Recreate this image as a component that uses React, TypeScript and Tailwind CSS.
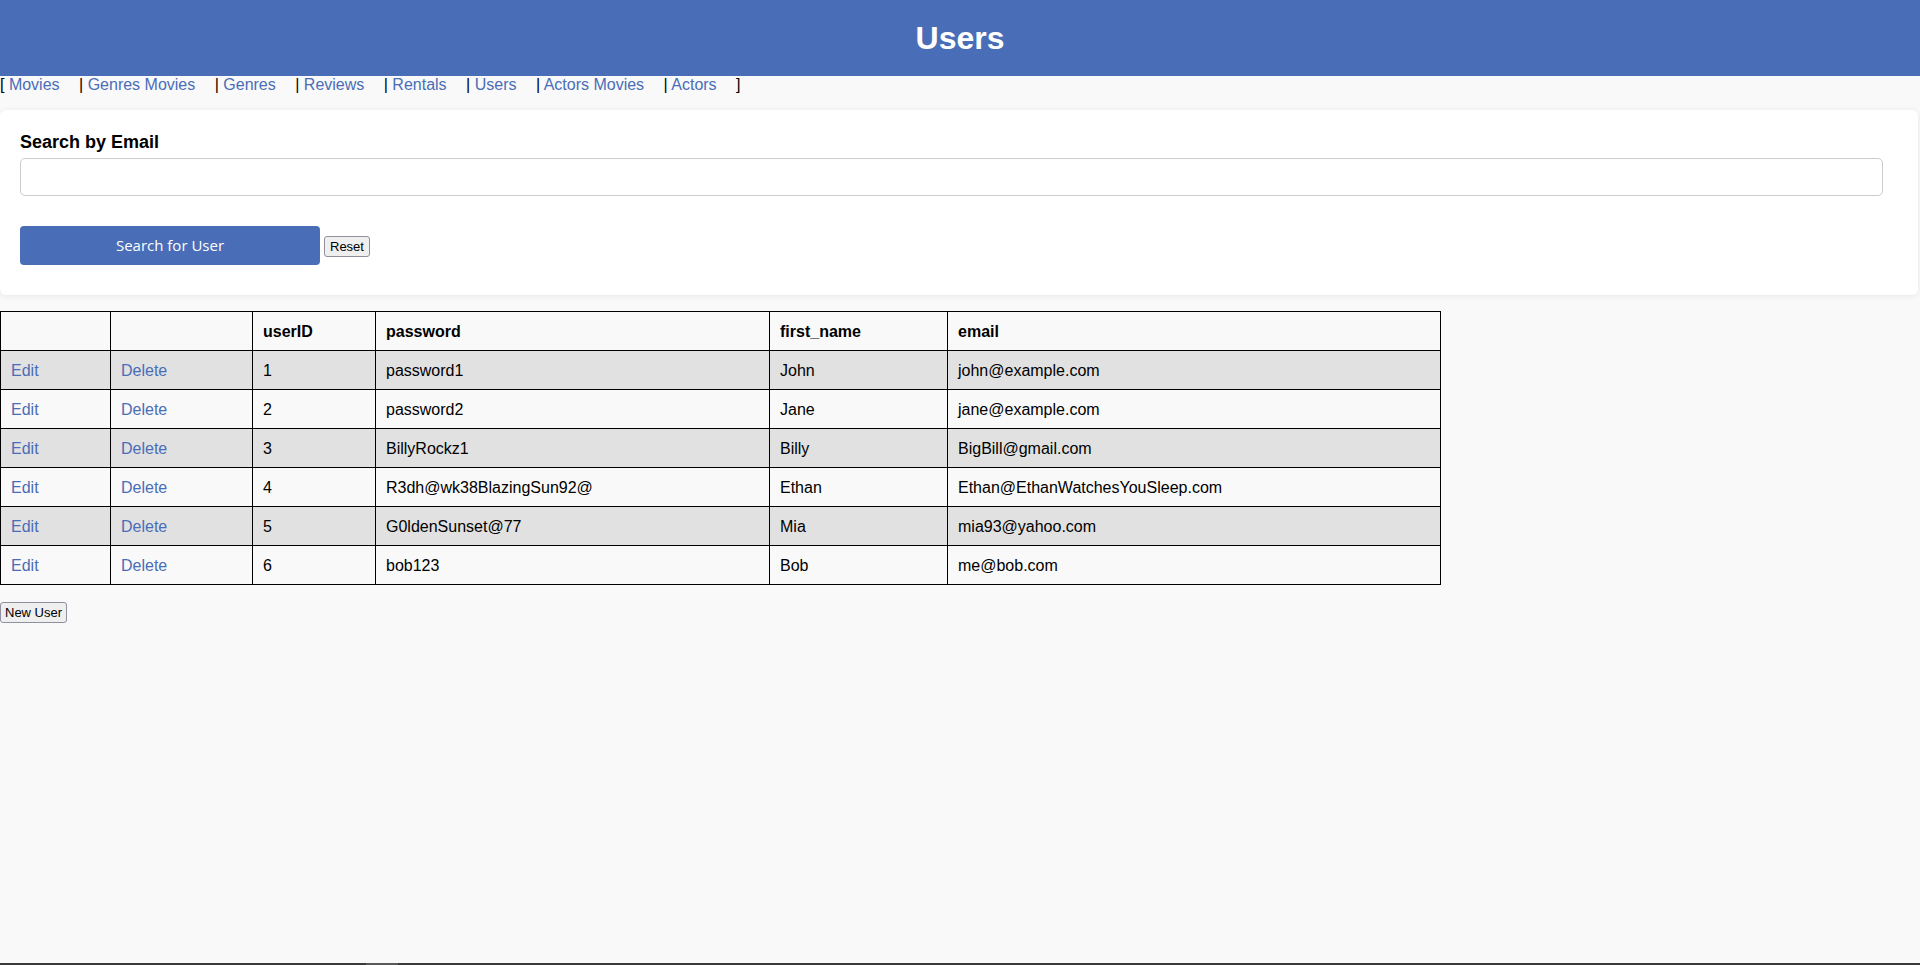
import React from "react";

type User = {
  userID: number;
  password: string;
  first_name: string;
  email: string;
};

const users: User[] = [
  { userID: 1, password: "password1", first_name: "John", email: "john@example.com" },
  { userID: 2, password: "password2", first_name: "Jane", email: "jane@example.com" },
  { userID: 3, password: "BillyRockz1", first_name: "Billy", email: "BigBill@gmail.com" },
  { userID: 4, password: "R3dh@wk38BlazingSun92@", first_name: "Ethan", email: "Ethan@EthanWatchesYouSleep.com" },
  { userID: 5, password: "G0ldenSunset@77", first_name: "Mia", email: "mia93@yahoo.com" },
  { userID: 6, password: "bob123", first_name: "Bob", email: "me@bob.com" },
];

const links = ["Movies", "Genres Movies", "Genres", "Reviews", "Rentals", "Users", "Actors Movies", "Actors"];

function NavBar() {
  return (
    <nav className="h-[18px] text-[16px] leading-[18px] text-black whitespace-pre">
      {"[ "}
      {links.map((name, i) => (
        <span key={name}>
          {i > 0 && "| "}
          <a href="#" className="text-[#4a6db7] mr-[15px]">
            {name}
          </a>
          {" "}
        </span>
      ))}
      {"]"}
    </nav>
  );
}

function SearchCard() {
  return (
    <section className="mt-[16px] mr-[2px] bg-white rounded-[6px] shadow-[0_1px_6px_rgba(0,0,0,0.08)] pt-[22px] px-[20px] pb-[30px]">
      <label className="block text-[18px] leading-[21px] font-bold text-black">Search by Email</label>
      <input
        type="text"
        className="block mt-[5px] w-[1863px] h-[38px] bg-white border border-[#cccccc] rounded-[5px] px-3 outline-none"
      />
      <div className="flex items-center mt-[30px]">
        <button className="w-[300px] h-[39px] bg-[#4a6db7] text-white rounded-[4px] text-[15px] font-['Open_Sans',sans-serif]">
          Search for User
        </button>
        <button className="ml-[4px] mt-[2px] h-[21px] px-[5px] bg-[#efefef] border border-[#8f8f9d] rounded-[3px] text-[13px] leading-none text-black">
          Reset
        </button>
      </div>
    </section>
  );
}

function UsersTable() {
  const cell = "border border-black px-[10px] pt-[1px] h-[39px] text-left align-middle";
  return (
    <table className="mt-[16px] w-[1440px] table-fixed border-collapse text-[16px] leading-[18px]">
      <colgroup>
        <col className="w-[110px]" />
        <col className="w-[142px]" />
        <col className="w-[123px]" />
        <col className="w-[394px]" />
        <col className="w-[178px]" />
        <col className="w-[493px]" />
      </colgroup>
      <thead>
        <tr className="bg-[#f9f9f9]">
          <th className={cell}></th>
          <th className={cell}></th>
          <th className={`${cell} font-bold`}>userID</th>
          <th className={`${cell} font-bold`}>password</th>
          <th className={`${cell} font-bold`}>first_name</th>
          <th className={`${cell} font-bold`}>email</th>
        </tr>
      </thead>
      <tbody>
        {users.map((u, i) => (
          <tr key={u.userID} className={i % 2 === 0 ? "bg-[#e1e1e1]" : "bg-[#f9f9f9]"}>
            <td className={cell}>
              <a href="#" className="text-[#4a6db7]">Edit</a>
            </td>
            <td className={cell}>
              <a href="#" className="text-[#4a6db7]">Delete</a>
            </td>
            <td className={cell}>{u.userID}</td>
            <td className={cell}>{u.password}</td>
            <td className={cell}>{u.first_name}</td>
            <td className={cell}>{u.email}</td>
          </tr>
        ))}
      </tbody>
    </table>
  );
}

export default function App() {
  return (
    <div className="min-h-[965px] flex flex-col bg-[#f9f9f9] text-black font-['Liberation_Sans',Arial,sans-serif]">
      <header className="h-[76px] bg-[#4a6db7] flex items-center justify-center">
        <h1 className="text-[32px] font-bold text-white">Users</h1>
      </header>
      <NavBar />
      <SearchCard />
      <UsersTable />
      <div className="mt-[15px]">
        <button className="h-[21px] px-[4px] bg-[#efefef] border border-[#8f8f9d] rounded-[3px] text-[13px] leading-none text-black">
          New User
        </button>
      </div>
      <div className="mt-auto flex h-[2px] bg-[#3a3a3a]">
        <div className="ml-[366px] w-[32px] bg-[#5a5a5a]" />
      </div>
    </div>
  );
}
